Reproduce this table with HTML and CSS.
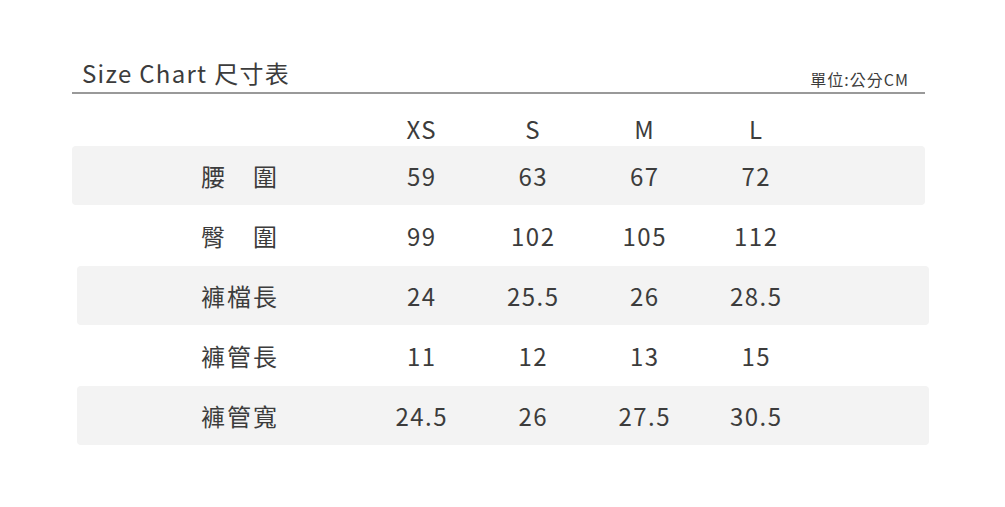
FILE: index.html
```html
<!DOCTYPE html>
<html lang="zh-Hant">
<head>
<meta charset="utf-8">
<link rel="stylesheet" href="styles.css">
</head>
<body>
<div class="chart">
  <div class="head">
    <div class="title">Size Chart 尺寸表</div>
    <div class="unit">單位:公分CM</div>
  </div>
  <div class="row sizes">
    <div class="label"></div><div>XS</div><div>S</div><div>M</div><div>L</div>
  </div>
  <div class="row shade">
    <div class="label">腰　圍</div><div>59</div><div>63</div><div>67</div><div>72</div>
  </div>
  <div class="row">
    <div class="label">臀　圍</div><div>99</div><div>102</div><div>105</div><div>112</div>
  </div>
  <div class="row shade shift">
    <div class="label">褲檔長</div><div>24</div><div>25.5</div><div>26</div><div>28.5</div>
  </div>
  <div class="row">
    <div class="label">褲管長</div><div>11</div><div>12</div><div>13</div><div>15</div>
  </div>
  <div class="row shade shift">
    <div class="label">褲管寬</div><div>24.5</div><div>26</div><div>27.5</div><div>30.5</div>
  </div>
</div>
</body>
</html>
```
FILE: styles.css
```css
html, body {
  margin: 0;
  padding: 0;
  background: #ffffff;
}
body {
  font-family: "Noto Sans CJK TC", "Noto Sans", sans-serif;
  color: #3c3c3c;
}
.chart {
  margin-left: 72px;
  width: 853px;
  padding-top: 56px;
}
.head {
  display: flex;
  justify-content: space-between;
  align-items: flex-end;
  border-bottom: 2px solid #999999;
  height: 38px;
  box-sizing: border-box;
  padding: 0 16px 0 10px;
}
.title {
  font-size: 24px;
  letter-spacing: 1.3px;
  line-height: 30px;
  padding-bottom: 4px;
}
.unit {
  font-size: 16px;
  letter-spacing: 1px;
  line-height: 20px;
  padding-bottom: 3px;
}
.row {
  display: grid;
  grid-template-columns: 182px repeat(4, 111.5px);
  height: 60px;
  align-items: center;
  padding-left: 112px;
  font-size: 24px;
  letter-spacing: 1.5px;
  line-height: 36px;
  border-radius: 4px;
}
.row > div {
  text-align: center;
}
.row > .label {
  width: 112px;
  letter-spacing: 2px;
}
.sizes {
  height: 52px;
  align-items: start;
  padding-top: 17px;
  box-sizing: border-box;
}
.shade {
  background: #f3f3f3;
  height: 59px;
  margin-bottom: 1px;
}
.shift {
  margin-left: 5px;
  margin-right: -4px;
  padding-left: 107px;
}
```
